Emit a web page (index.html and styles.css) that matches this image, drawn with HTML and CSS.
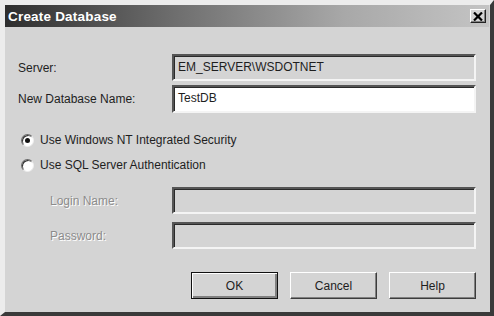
FILE: index.html
```html
<!DOCTYPE html>
<html lang="en">
<head>
    <meta charset="UTF-8">
    <title>Create Database</title>
    <link rel="stylesheet" href="styles.css">
</head>
<body>
    <div class="dialog">
        <div class="titlebar">
            <span class="title">Create Database</span>
            <button class="close-btn" title="Close">
                <svg width="10" height="9" viewBox="0 0 10 9">
                    <path d="M1 0.5 L9 8.5 M9 0.5 L1 8.5" stroke="#000" stroke-width="2.2"/>
                </svg>
            </button>
        </div>

        <div class="content">
            <div class="row">
                <label class="label">Server:</label>
                <div class="field readonly">EM_SERVER\WSDOTNET</div>
            </div>
            <div class="row row-db">
                <label class="label">New Database Name:</label>
                <div class="field">TestDB</div>
            </div>

            <div class="radio-row first">
                <span class="radio checked"></span>
                <span>Use Windows NT Integrated Security</span>
            </div>
            <div class="radio-row">
                <span class="radio"></span>
                <span>Use SQL Server Authentication</span>
            </div>

            <div class="row row-login">
                <label class="label disabled">Login Name:</label>
                <div class="field readonly"></div>
            </div>
            <div class="row row-pass">
                <label class="label disabled">Password:</label>
                <div class="field readonly"></div>
            </div>

            <div class="buttons">
                <button class="btn default">OK</button>
                <button class="btn">Cancel</button>
                <button class="btn">Help</button>
            </div>
        </div>
    </div>
</body>
</html>
```
FILE: styles.css
```css
:root {
    --face: #d4d4d4;
    --light: #ffffff;
    --shadow: #808080;
    --dark: #3c3c3c;
    --text: #1e1e1e;
}

* {
    margin: 0;
    padding: 0;
    box-sizing: border-box;
}

body {
    width: 494px;
    height: 316px;
    background: var(--face);
    font-family: 'Liberation Sans', Arial, sans-serif;
    font-size: 12px;
    color: var(--text);
    overflow: hidden;
}

.dialog {
    width: 494px;
    height: 316px;
    background: var(--face);
    border-style: solid;
    border-width: 5px 4px 4px 5px;
    border-color: #ececec #3a3a3a #3a3a3a #ececec;
    display: flex;
    flex-direction: column;
}

.titlebar {
    height: 22px;
    margin-right: 1px;
    background: linear-gradient(to right, #2e2e2e 0%, #6e6e6e 35%, #a8a8a8 70%, #c4c4c4 100%);
    display: flex;
    align-items: center;
    justify-content: space-between;
    padding: 0 3px 0 3px;
}

.title {
    color: #fff;
    font-weight: bold;
    font-size: 13.5px;
    letter-spacing: 0.2px;
}

.close-btn {
    width: 16px;
    height: 14px;
    background: var(--face);
    border: 1px solid;
    border-color: var(--light) #222 #222 var(--light);
    box-shadow: inset -1px -1px 0 var(--shadow);
    display: flex;
    align-items: center;
    justify-content: center;
}

.content {
    padding: 27px 13px 0 13px;
    display: flex;
    flex-direction: column;
}

.row {
    display: grid;
    grid-template-columns: 154px 304px;
    align-items: center;
}

.row-db {
    margin-top: 4px;
}

.row-login {
    margin-top: 13px;
}

.row-pass {
    margin-top: 8px;
}

.label.disabled {
    padding-left: 32px;
    color: #8c8c8c;
    text-shadow: 1px 1px 0 #fff;
}

.field {
    height: 27px;
    background: #fff;
    border: 2px solid;
    border-color: #555 #f4f4f4 #f4f4f4 #555;
    box-shadow: inset 1px 1px 0 #2a2a2a;
    padding: 4px 0 0 4px;
    white-space: nowrap;
}

.row-db .field {
    height: 28px;
}

.field.readonly {
    background: var(--face);
}

.radio-row {
    display: flex;
    align-items: center;
    gap: 6px;
    height: 18px;
    margin-top: 7px;
    padding-left: 3px;
}

.radio-row.first {
    margin-top: 18px;
}

.radio {
    width: 13px;
    height: 13px;
    border-radius: 50%;
    background: #fff;
    border: 1px solid;
    border-color: #6a6a6a #ededed #ededed #6a6a6a;
    box-shadow: inset 1px 1px 0 #333;
    position: relative;
}

.radio.checked::after {
    content: "";
    position: absolute;
    left: 3px;
    top: 3px;
    width: 5px;
    height: 5px;
    border-radius: 50%;
    background: #111;
}

.buttons {
    display: flex;
    justify-content: flex-end;
    gap: 12px;
    width: 458px;
    margin-top: 23px;
}

.btn {
    width: 87px;
    height: 27px;
    background: var(--face);
    border: 1px solid;
    border-color: var(--light) var(--dark) var(--dark) var(--light);
    box-shadow: inset -1px -1px 0 var(--shadow);
    font-family: 'Liberation Sans', Arial, sans-serif;
    font-size: 12px;
    color: var(--text);
}

.btn.default {
    border: 1px solid #111;
    box-shadow: inset 1px 1px 0 var(--light), inset -2px -2px 0 var(--shadow);
}
```
